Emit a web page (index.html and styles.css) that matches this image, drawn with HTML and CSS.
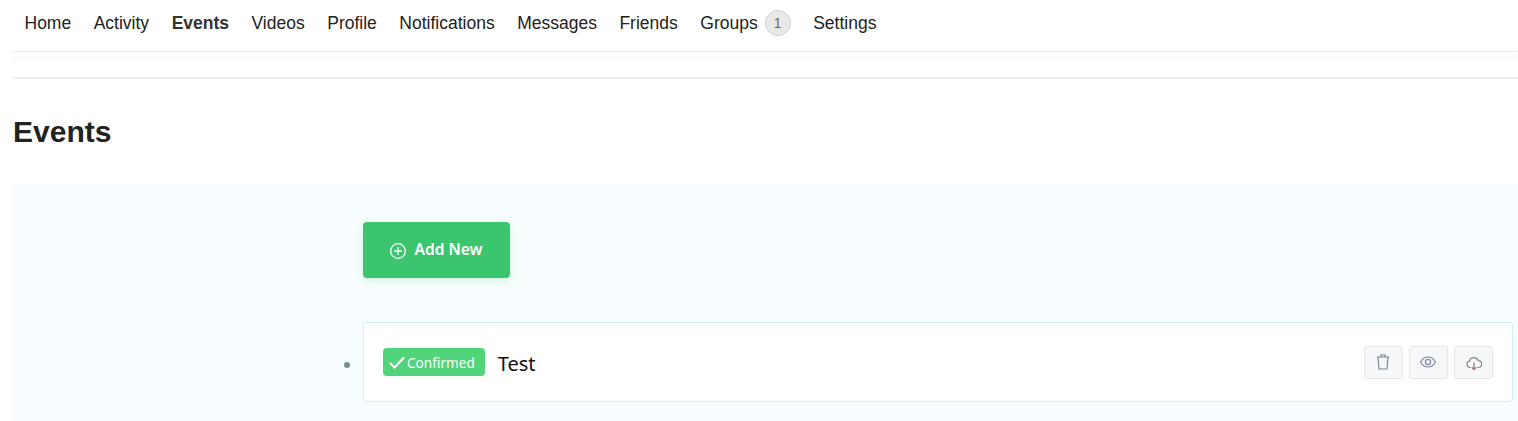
FILE: index.html
```html
<!DOCTYPE html>
<html lang="en">
<head>
<meta charset="utf-8">
<title>Events</title>
<link rel="stylesheet" href="styles.css">
</head>
<body>
<div class="page">
  <nav class="nav">
    <a class="nav-item" href="#">Home</a>
    <a class="nav-item" href="#">Activity</a>
    <a class="nav-item active" href="#">Events</a>
    <a class="nav-item" href="#">Videos</a>
    <a class="nav-item" href="#">Profile</a>
    <a class="nav-item" href="#">Notifications</a>
    <a class="nav-item" href="#">Messages</a>
    <a class="nav-item" href="#">Friends</a>
    <a class="nav-item" href="#">Groups<span class="count">1</span></a>
    <a class="nav-item" href="#">Settings</a>
  </nav>
  <div class="subnav"></div>
  <h1 class="title">Events</h1>
  <section class="panel">
    <button class="add-btn" type="button">
      <svg class="add-icon" viewBox="0 0 16 16" fill="none" stroke="currentColor" stroke-width="1.3"><circle cx="8" cy="8" r="7.300"/><path d="M8 4v8M4 8h8"/></svg>
      <span>Add New</span>
    </button>
    <div class="row">
      <span class="dot"></span>
      <article class="card">
        <span class="badge">
          <svg class="check" viewBox="0 0 16 13" fill="none" stroke="currentColor" stroke-width="2"><path d="M1 7l4.500 4.500L15 1.500"/></svg>
          Confirmed
        </span>
        <span class="card-title">Test</span>
        <div class="actions">
          <button class="icon-btn" type="button" aria-label="Delete">
            <svg class="icon icon-shift" viewBox="0 0 16 16" fill="none" stroke-width="1.200"><path class="stroke-a" d="M1.800 3h12.400M5.800 3V1h4.400v2"/><path class="stroke-a" d="M3 3.200l1 11.800h8l1-11.800"/></svg>
          </button>
          <button class="icon-btn" type="button" aria-label="View">
            <svg class="icon icon-eye icon-shift" viewBox="0 0 16 12" fill="none" stroke-width="1.200"><path class="stroke-a" d="M.6 6C2.400 2.600 5 1 8 1s5.600 1.600 7.400 5C13.600 9.400 11 11 8 11S2.400 9.400.6 6z"/><circle class="stroke-a" cx="8" cy="6" r="2.600"/></svg>
          </button>
          <button class="icon-btn" type="button" aria-label="Download">
            <svg class="icon icon-cloud" viewBox="0 0 16 16" fill="none" stroke-width="1.200"><path class="stroke-a" d="M4.800 12.500H4A3.200 3.200 0 0 1 3.500 6.200 4.600 4.600 0 0 1 12.300 5.700 3.400 3.400 0 0 1 12.200 12.500h-1"/><path class="stroke-b" d="M8 7.500v7M5.800 12.300L8 14.500l2.200-2.200"/></svg>
          </button>
        </div>
      </article>
    </div>
  </section>
</div>
</body>
</html>
```
FILE: styles.css
```css
* { box-sizing: border-box; }
html, body { margin: 0; padding: 0; background: #fff; }
body { height: 421px; overflow: hidden; }

.page {
  padding-left: 13px;
  font-family: "Liberation Sans", Arial, sans-serif;
  color: #222;
}

.nav {
  display: flex;
  align-items: center;
  gap: 22.5px;
  height: 52px;
  padding: 0 0 6px 11.5px;
  border-bottom: 1px solid #ededed;
}

.nav-item {
  display: flex;
  align-items: center;
  font-size: 17.5px;
  line-height: 24px;
  color: #222;
  text-decoration: none;
}

.nav-item.active { font-weight: 700; color: #333; }

.count {
  display: flex;
  align-items: center;
  justify-content: center;
  width: 26px;
  height: 26px;
  margin-left: 7px;
  border: 1px solid #d0d0d0;
  border-radius: 50%;
  background: #e9e9e9;
  font-size: 14px;
  color: #6f5f6f;
}

.subnav {
  height: 27px;
  border-bottom: 2px solid #eeeeee;
  background: linear-gradient(#fcfcfc, #fff 60%);
}

.title {
  margin: 0;
  padding: 35px 0 33px;
  font-size: 30px;
  line-height: 36px;
  font-weight: 700;
  color: #222;
}

.panel {
  height: 238px;
  padding: 39px 5px 0 331px;
  background: #f8feff;
  font-family: "Noto Sans", sans-serif;
}

.add-btn {
  display: flex;
  align-items: center;
  justify-content: center;
  gap: 8px;
  width: 147px;
  height: 56px;
  margin-left: 19px;
  padding: 0 0 2px;
  border: 0;
  border-radius: 4px;
  background: #3cc56f;
  box-shadow: 0 3px 8px rgba(60, 197, 111, 0.22);
  color: #fff;
  font-family: inherit;
  font-size: 15.5px;
  font-weight: 600;
}

.add-icon { width: 16px; height: 16px; margin: 3px 1px 0 -1px; }

.row {
  display: flex;
  align-items: center;
  gap: 13px;
  margin-top: 44px;
}

.dot {
  flex: none;
  width: 6px;
  height: 6px;
  margin-top: 6px;
  border-radius: 50%;
  background: #7c8f96;
}

.card {
  display: flex;
  flex: 1;
  align-items: center;
  height: 80px;
  padding: 0 19px;
  border: 1px solid #cdeef3;
  border-radius: 3px;
  background: #fff;
}

.badge {
  display: flex;
  align-items: center;
  gap: 2px;
  height: 28px;
  padding: 0 10px 0 6px;
  border-radius: 4px;
  background: #52d57a;
  color: #fff;
  font-size: 13.6px;
}

.check { width: 16px; height: 13px; }

.card-title {
  margin: 2px 0 0 13px;
  font-size: 20px;
  color: #111;
}

.actions {
  display: flex;
  gap: 6px;
  margin-left: auto;
}

.icon-btn {
  display: flex;
  align-items: center;
  justify-content: center;
  width: 39px;
  height: 33px;
  padding: 0;
  border: 1px solid #e6e6e6;
  border-radius: 3px;
  background: #f6f7f8;
}

.icon { width: 16px; height: 16px; }
.icon-eye { height: 12px; }
.icon-shift { margin-right: 1px; }
.icon-cloud { margin-top: 2px; }
.stroke-a { stroke: #7d8798; }
.stroke-b { stroke: #9a6a72; }
```
